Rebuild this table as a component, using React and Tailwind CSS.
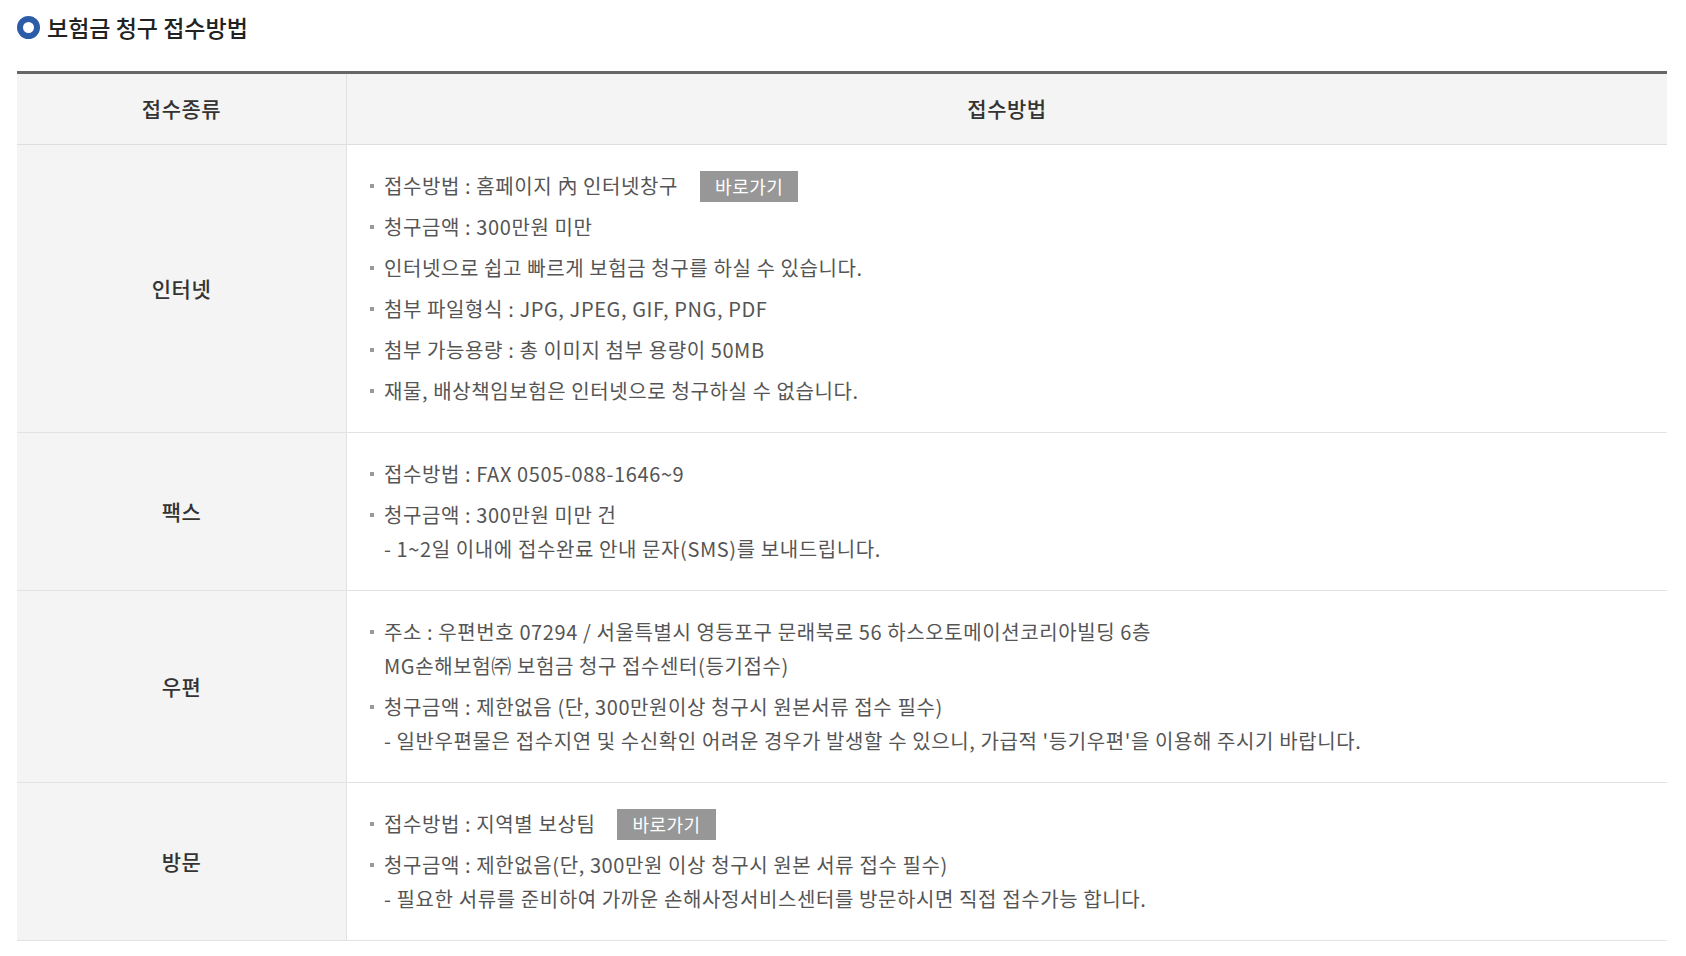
import React from 'react';

const rows = [
    {
        label: '인터넷',
        items: [
            { text: '접수방법 : 홈페이지 內 인터넷창구', button: true },
            { text: '청구금액 : 300만원 미만' },
            { text: '인터넷으로 쉽고 빠르게 보험금 청구를 하실 수 있습니다.' },
            { text: '첨부 파일형식 : JPG, JPEG, GIF, PNG, PDF' },
            { text: '첨부 가능용량 : 총 이미지 첨부 용량이 50MB' },
            { text: '재물, 배상책임보험은 인터넷으로 청구하실 수 없습니다.' },
        ],
    },
    {
        label: '팩스',
        items: [
            { text: '접수방법 : FAX 0505-088-1646~9' },
            { text: '청구금액 : 300만원 미만 건', sub: ['- 1~2일 이내에 접수완료 안내 문자(SMS)를 보내드립니다.'] },
        ],
    },
    {
        label: '우편',
        items: [
            {
                text: '주소 : 우편번호 07294 / 서울특별시 영등포구 문래북로 56 하스오토메이션코리아빌딩 6층',
                sub: ['MG손해보험㈜ 보험금 청구 접수센터(등기접수)'],
            },
            {
                text: '청구금액 : 제한없음 (단, 300만원이상 청구시 원본서류 접수 필수)',
                sub: ["- 일반우편물은 접수지연 및 수신확인 어려운 경우가 발생할 수 있으니, 가급적 '등기우편'을 이용해 주시기 바랍니다."],
            },
        ],
    },
    {
        label: '방문',
        items: [
            { text: '접수방법 : 지역별 보상팀', button: true },
            {
                text: '청구금액 : 제한없음(단, 300만원 이상 청구시 원본 서류 접수 필수)',
                sub: ['- 필요한 서류를 준비하여 가까운 손해사정서비스센터를 방문하시면 직접 접수가능 합니다.'],
            },
        ],
    },
];

function Item({ item }) {
    return (
        <li className="relative pl-[14px]">
            <span className="absolute left-0 top-[15px] w-[4px] h-[4px] bg-[#9a9a9a]"></span>
            <div className="flex items-center h-[34px]">
                <span>{item.text}</span>
                {item.button && (
                    <a className="ml-[22px] inline-flex items-center justify-center h-[31px] px-[15px] bg-[#979797] text-white text-[18px] tracking-[0.5px] leading-none">
                        바로가기
                    </a>
                )}
            </div>
            {item.sub && item.sub.map((s, i) => (
                <div key={i} className="h-[34px] leading-[34px]">{s}</div>
            ))}
        </li>
    );
}

export default function App() {
    return (
        <div className="min-h-screen bg-white px-[17px] pt-[10px] text-[#555]" style={{ fontFamily: '"Noto Sans CJK KR", "Noto Sans", sans-serif' }}>
            {/* 제목 */}
            <h2 className="flex items-center h-[34px] text-[23px] font-medium text-[#222]">
                <span className="w-[23px] h-[23px] rounded-full border-[6px] border-[#2c5ba8] mr-[7px]"></span>
                보험금 청구 접수방법
            </h2>

            {/* 표 */}
            <div className="mt-[27px] w-[1650px] border-t-[3px] border-[#666]">
                <div className="grid grid-cols-[330px_1fr] bg-[#f4f4f4] border-b border-[#dedede] h-[71px] text-[21px] tracking-[0.5px] font-medium text-[#333]">
                    <div className="flex items-center justify-center border-r border-[#e2e2e2]">접수종류</div>
                    <div className="flex items-center justify-center">접수방법</div>
                </div>
                {rows.map((row) => (
                    <div key={row.label} className="grid grid-cols-[330px_1fr] border-b border-[#e2e2e2]">
                        <div className="flex items-center justify-center bg-[#f4f4f4] border-r border-[#e2e2e2] text-[21px] tracking-[0.5px] font-medium text-[#333]">
                            {row.label}
                        </div>
                        <ul className="py-[24px] pl-[23px] text-[20px] tracking-[0.6px] flex flex-col gap-[7px] bg-white">
                            {row.items.map((item, i) => (
                                <Item key={i} item={item} />
                            ))}
                        </ul>
                    </div>
                ))}
            </div>
        </div>
    );
}
